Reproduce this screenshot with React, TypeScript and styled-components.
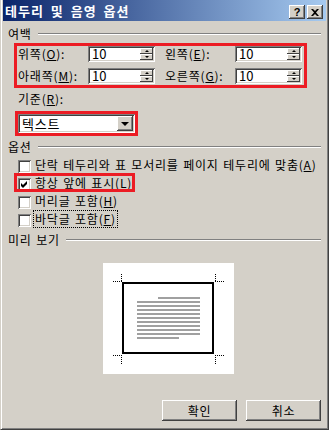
import React from 'react';
import styled, { createGlobalStyle } from 'styled-components';

const GlobalStyle = createGlobalStyle`
  html, body { margin: 0; padding: 0; background: #D4D0C8; }
  body {
    font-family: "Noto Sans CJK KR", "Liberation Sans", sans-serif;
    font-size: 12px;
    letter-spacing: 0.8px;
    word-spacing: 1px;
    color: #000;
  }
  * { box-sizing: border-box; }
`;

const Frame = styled.div`
  width: 329px;
  height: 430px;
  background: #D4D0C8;
  border-left: 1px solid #D4D0C8;
  border-right: 1px solid #404040;
  border-bottom: 1px solid #404040;
  box-shadow: inset 1px 0 #ffffff, inset -1px -1px #808080;
  padding: 0 2px 2px 2px;
  display: flex;
  flex-direction: column;
`;

const TitleBar = styled.div`
  height: 21px;
  display: flex;
  align-items: flex-start;
  background: linear-gradient(to right, #0A246A, #A6CAF0);
  padding: 0 3px 0 2px;
`;

const TitleText = styled.span`
  flex: 1;
  color: #fff;
  font-weight: bold;
  font-size: 13px;
  line-height: 21px;
  letter-spacing: 1px;
  word-spacing: 3px;
`;

const TitleButton = styled.div<{ $ml: number }>`
  width: 16px;
  height: 14px;
  margin-top: 5px;
  margin-left: ${p => p.$ml}px;
  background: #D4D0C8;
  box-shadow: inset -1px -1px #404040, inset 1px 1px #ffffff, inset -2px -2px #808080;
  display: flex;
  align-items: center;
  justify-content: center;
  font-family: "Liberation Sans", sans-serif;
  font-weight: bold;
  font-size: 11px;
  line-height: 14px;
  letter-spacing: 0;
`;

const GroupHeader = styled.div<{ $mt: number }>`
  display: flex;
  align-items: center;
  height: 14px;
  line-height: 14px;
  margin-top: ${p => p.$mt}px;
  padding: 0 5px;
`;

const GroupLine = styled.div`
  flex: 1;
  margin-left: 6px;
  border-top: 1px solid #808080;
  border-bottom: 1px solid #ffffff;
`;

const MarginsBox = styled.div`
  margin: 2px 0 0 11px;
  width: 293px;
  border: 3px solid #EC1C24;
  padding: 0 0 1px 1px;
  display: grid;
  grid-template-columns: 137px 137px;
  column-gap: 10px;
  row-gap: 6px;
`;

const Field = styled.div`
  display: flex;
  align-items: center;
  height: 16px;
`;

const FieldLabel = styled.span`
  width: 70px;
  line-height: 16px;
  white-space: nowrap;
`;

const SpinBox = styled.div`
  width: 67px;
  height: 16px;
  background: #fff;
  box-shadow: inset 1px 1px #808080, inset -1px -1px #ffffff, inset 2px 2px #404040, inset -2px -2px #D4D0C8;
  padding: 2px;
  display: flex;
`;

const SpinValue = styled.span`
  flex: 1;
  font-size: 13px;
  line-height: 12px;
  padding-left: 2px;
  letter-spacing: 0;
`;

const SpinButtons = styled.div`
  width: 13px;
  display: flex;
  flex-direction: column;
`;

const SpinBtn = styled.div`
  flex: 1;
  background: #D4D0C8;
  box-shadow: inset -1px -1px #404040, inset 1px 1px #ffffff;
  display: flex;
  align-items: center;
  justify-content: center;
`;

const Tri = styled.div<{ $down?: boolean; $w: number }>`
  width: 0;
  height: 0;
  border-left: ${p => p.$w}px solid transparent;
  border-right: ${p => p.$w}px solid transparent;
  ${p => (p.$down ? `border-top: ${p.$w}px solid #000;` : `border-bottom: ${p.$w}px solid #000;`)}
`;

const PlainLabel = styled.div<{ $mt: number }>`
  margin: ${p => p.$mt}px 0 0 15px;
  height: 14px;
  line-height: 14px;
`;

const ComboHighlight = styled.div`
  margin: 5px 0 0 12px;
  width: 123px;
  border: 3px solid #EC1C24;
`;

const Combo = styled.div`
  height: 19px;
  background: #fff;
  box-shadow: inset 1px 1px #808080, inset -1px -1px #ffffff, inset 2px 2px #404040, inset -2px -2px #D4D0C8;
  padding: 2px;
  display: flex;
  align-items: stretch;
`;

const ComboText = styled.span`
  flex: 1;
  padding-left: 2px;
  line-height: 15px;
  font-size: 13px;
`;

const ComboButton = styled.div`
  width: 16px;
  background: #D4D0C8;
  box-shadow: inset -1px -1px #404040, inset 1px 1px #ffffff, inset -2px -2px #808080;
  display: flex;
  align-items: center;
  justify-content: center;
`;

const CheckList = styled.div`
  margin: 4px 0 0 15px;
  display: flex;
  flex-direction: column;
`;

const CheckRow = styled.div`
  position: relative;
  height: 18px;
  display: flex;
  align-items: flex-start;
`;

const Box = styled.div`
  width: 13px;
  height: 13px;
  margin-top: 2px;
  background: #fff;
  box-shadow: inset 1px 1px #808080, inset -1px -1px #ffffff, inset 2px 2px #404040, inset -2px -2px #D4D0C8;
  display: flex;
  align-items: center;
  justify-content: center;
`;

const CheckText = styled.span<{ $focus?: boolean }>`
  margin: -2px 0 0 2px;
  padding: 0 1px;
  line-height: 16px;
  border: 1px ${p => (p.$focus ? 'dotted #000' : 'solid transparent')};
  white-space: nowrap;
`;

const RowHighlight = styled.div`
  position: absolute;
  left: -4px;
  top: -3px;
  width: 121px;
  height: 19px;
  border: 3px solid #EC1C24;
  pointer-events: none;
`;

const Preview = styled.div`
  margin: 16px 0 0 100px;
  width: 131px;
  height: 111px;
  background: #fff;
`;

const ButtonRow = styled.div`
  margin-top: 26px;
  display: flex;
  justify-content: flex-end;
  gap: 9px;
  padding-right: 5px;
`;

const PushButton = styled.div`
  width: 75px;
  height: 21px;
  background: #D4D0C8;
  box-shadow: inset -1px -1px #404040, inset 1px 1px #ffffff, inset -2px -2px #808080;
  display: flex;
  align-items: center;
  justify-content: center;
  font-size: 12px;
  line-height: 14px;
`;

const Spin: React.FC<{ value: string }> = ({ value }) => (
  <SpinBox>
    <SpinValue>{value}</SpinValue>
    <SpinButtons>
      <SpinBtn><Tri $w={2} /></SpinBtn>
      <SpinBtn><Tri $w={2} $down /></SpinBtn>
    </SpinButtons>
  </SpinBox>
);

const PreviewDrawing = () => {
  const full = [38, 42, 46, 50, 54, 58, 62, 66, 70];
  const dot = { stroke: '#000', strokeWidth: 1, strokeDasharray: '1 1' };
  return (
    <svg width="131" height="111" viewBox="0 0 131 111">
      <rect x="20" y="20" width="90" height="70" fill="none" stroke="#000" strokeWidth="2" />
      <line x1="10" y1="18.5" x2="19" y2="18.5" {...dot} />
      <line x1="18.5" y1="11" x2="18.5" y2="19" {...dot} />
      <line x1="112" y1="18.5" x2="121" y2="18.5" {...dot} />
      <line x1="112.5" y1="11" x2="112.5" y2="19" {...dot} />
      <line x1="10" y1="92.5" x2="19" y2="92.5" {...dot} />
      <line x1="18.5" y1="92" x2="18.5" y2="101" {...dot} />
      <line x1="112" y1="92.5" x2="121" y2="92.5" {...dot} />
      <line x1="112.5" y1="92" x2="112.5" y2="101" {...dot} />
      <rect x="55" y="34" width="42" height="2" fill="#A0A0A0" />
      {full.map(y => (
        <rect key={y} x="34" y={y} width="63" height="2" fill="#A0A0A0" />
      ))}
      <rect x="34" y="74" width="42" height="2" fill="#A0A0A0" />
    </svg>
  );
};

const CheckMark = () => (
  <svg width="9" height="9" viewBox="0 0 9 9">
    <path d="M1 3 L3 5 L7 1 L7 4 L3 8 L1 6 Z" fill="#000" />
  </svg>
);

export default function App() {
  return (
    <>
      <GlobalStyle />
      <Frame>
        <TitleBar>
          <TitleText>테두리 및 음영 옵션</TitleText>
          <TitleButton $ml={0}>?</TitleButton>
          <TitleButton $ml={2}>
            <svg width="8" height="7" viewBox="0 0 8 7">
              <path d="M0 0 L2 0 L4 2 L6 0 L8 0 L5 3.5 L8 7 L6 7 L4 5 L2 7 L0 7 L3 3.5 Z" fill="#000" />
            </svg>
          </TitleButton>
        </TitleBar>

        <GroupHeader $mt={6}>
          <span>여백</span>
          <GroupLine />
        </GroupHeader>

        <MarginsBox>
          <Field>
            <FieldLabel>위쪽(<u>O</u>):</FieldLabel>
            <Spin value="10" />
          </Field>
          <Field>
            <FieldLabel>왼쪽(<u>E</u>):</FieldLabel>
            <Spin value="10" />
          </Field>
          <Field>
            <FieldLabel>아래쪽(<u>M</u>):</FieldLabel>
            <Spin value="10" />
          </Field>
          <Field>
            <FieldLabel>오른쪽(<u>G</u>):</FieldLabel>
            <Spin value="10" />
          </Field>
        </MarginsBox>

        <PlainLabel $mt={4}>기준(<u>R</u>):</PlainLabel>
        <ComboHighlight>
          <Combo>
            <ComboText>텍스트</ComboText>
            <ComboButton><Tri $w={4} $down /></ComboButton>
          </Combo>
        </ComboHighlight>

        <GroupHeader $mt={4}>
          <span>옵션</span>
          <GroupLine />
        </GroupHeader>

        <CheckList>
          <CheckRow>
            <Box />
            <CheckText>단락 테두리와 표 모서리를 페이지 테두리에 맞춤(<u>A</u>)</CheckText>
          </CheckRow>
          <CheckRow>
            <Box><CheckMark /></Box>
            <CheckText>항상 앞에 표시(<u>L</u>)</CheckText>
            <RowHighlight />
          </CheckRow>
          <CheckRow>
            <Box />
            <CheckText>머리글 포함(<u>H</u>)</CheckText>
          </CheckRow>
          <CheckRow>
            <Box />
            <CheckText $focus>바닥글 포함(<u>F</u>)</CheckText>
          </CheckRow>
        </CheckList>

        <GroupHeader $mt={3}>
          <span>미리 보기</span>
          <GroupLine />
        </GroupHeader>

        <Preview>
          <PreviewDrawing />
        </Preview>

        <ButtonRow>
          <PushButton>확인</PushButton>
          <PushButton>취소</PushButton>
        </ButtonRow>
      </Frame>
    </>
  );
}
